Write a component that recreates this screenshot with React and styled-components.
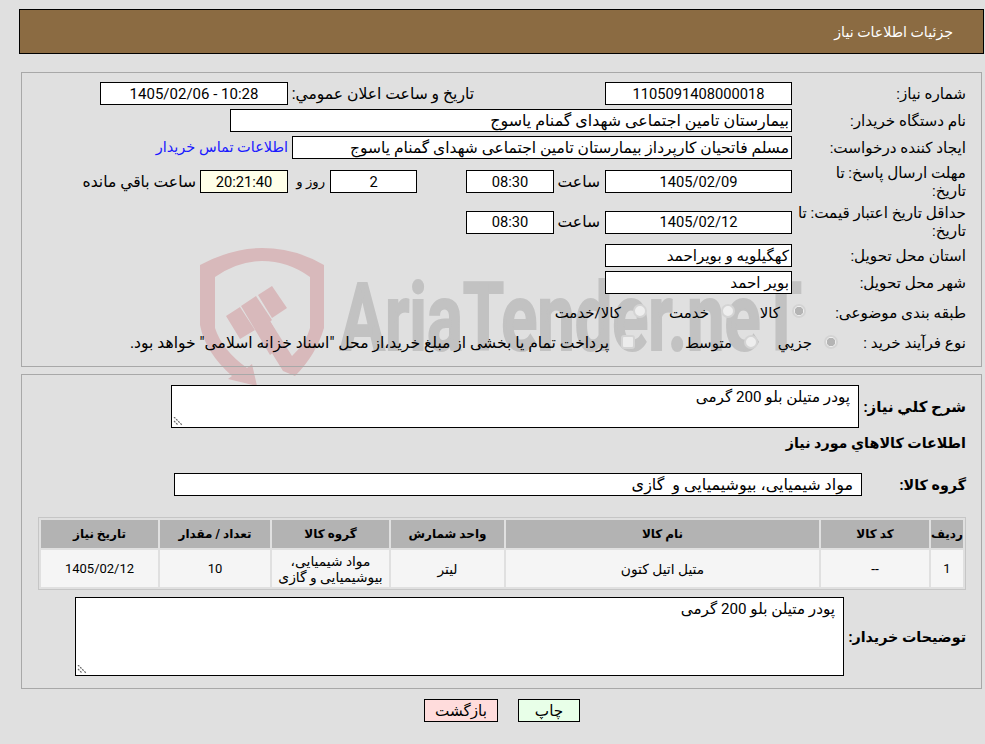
import React from "react";
import styled, { createGlobalStyle } from "styled-components";

const Global = createGlobalStyle`
  html, body { margin: 0; padding: 0; background: #e0e0e0; overflow: hidden; }
  body { font-family: Roboto, "DejaVu Sans", sans-serif; font-size: 15.2px; color: #000; }
`;
const Page = styled.div`
  position: relative;
  width: 985px;
  height: 744px;
  direction: rtl;
  overflow: hidden;
  padding-top: 9px;
  box-sizing: border-box;
`;
const Watermark = styled.svg`
  position: absolute;
  left: 0;
  top: 0;
  z-index: 0;
  pointer-events: none;
`;
const Header = styled.div`
  position: relative;
  z-index: 1;
  height: 45px;
  margin: 0 1px 0 19px;
  padding-right: 30px;
  box-sizing: border-box;
  display: flex;
  align-items: center;
  background: #8b6b42;
  border: 1px solid #000;
  color: #fff;
  font-size: 14.2px;
`;
const Panel = styled.section`
  position: relative;
  z-index: 1;
  box-sizing: border-box;
  margin: ${(p) => p.$mt}px 3px 0 21px;
  height: ${(p) => p.$h}px;
  padding: ${(p) => p.$pt}px 15px 0 16px;
  border: 1px solid #a8a8a8;
  display: flex;
  flex-direction: column;
  gap: ${(p) => p.$gap || 0}px;
`;
const Row = styled.div`
  display: flex;
  align-items: center;
  box-sizing: border-box;
  min-height: ${(p) => p.$h || 23}px;
  margin-top: ${(p) => p.$mt || 0}px;
  padding-top: ${(p) => p.$pt || 0}px;
`;
const Label = styled.div`
  flex: none;
  width: ${(p) => p.$w || 174}px;
  white-space: nowrap;
  line-height: 18px;
  font-weight: ${(p) => (p.$bold ? 700 : 400)};
  font-size: ${(p) => p.$fs || 15.2}px;
`;
const Field = styled.div`
  flex: none;
  box-sizing: border-box;
  width: ${(p) => p.$w}px;
  height: 23px;
  margin-right: ${(p) => p.$mr || 0}px;
  padding: 0 ${(p) => p.$pad ?? 2}px;
  background: ${(p) => p.$bg || "#fff"};
  border: 1px solid #000;
  display: flex;
  align-items: center;
  justify-content: ${(p) => (p.$center ? "center" : "flex-start")};
  white-space: pre;
  overflow: hidden;
  font-size: ${(p) => p.$fs || 15.2}px;
`;
const Inline = styled.span`
  flex: none;
  width: ${(p) => p.$w}px;
  margin-right: ${(p) => p.$mr || 0}px;
  white-space: nowrap;
  font-size: ${(p) => p.$fs || 15.6}px;
`;
const ContactLink = styled.a`
  margin-right: 4px;
  color: #1a1aff;
  text-decoration: none;
  font-size: 14.5px;
`;
const Option = styled.label`
  flex: none;
  width: ${(p) => p.$w}px;
  display: flex;
  align-items: center;
  gap: 12px;
  white-space: nowrap;
  font-size: ${(p) => p.$fs || 15}px;
`;
const Radio = styled.input.attrs({ disabled: true, readOnly: true })`
  appearance: none;
  flex: none;
  width: 14px;
  height: 14px;
  margin: 0 0 ${(p) => p.$lift}px;
  box-sizing: border-box;
  border: 2px solid #d4d4d4;
  border-radius: ${(p) => (p.type === "checkbox" ? "3px" : "50%")};
  background: ${(p) => (p.type === "checkbox" ? "#ececec" : "#eeeeee")};
  &:checked { background: radial-gradient(circle, #b4b4b4 0 4px, #f0f0f0 4.5px); }
`;
const AreaWrap = styled.div`
  position: relative;
  flex: none;
  width: ${(p) => p.$w}px;
  height: ${(p) => p.$hh}px;
`;
const Area = styled.textarea.attrs({ readOnly: true })`
  box-sizing: border-box;
  display: block;
  width: 100%;
  height: 100%;
  margin: 0;
  padding: 3px 8px;
  border: 1px solid #000;
  border-radius: 0;
  background: #fff;
  color: #000;
  font: inherit;
  line-height: 17px;
  outline: none;
  overflow: hidden;
  resize: none;
  direction: rtl;
`;
const Grip = styled.svg`
  position: absolute;
  left: 2px;
  bottom: 1px;
`;
const Heading = styled.div`
  font-weight: 700;
  font-size: 14.3px;
  line-height: 18px;
`;
const Table = styled.table`
  table-layout: fixed;
  width: 928px;
  margin: 0 0 0 -1px;
  border-collapse: separate;
  border-spacing: 2px;
  border: 1px solid #c6c6c6;
  font-size: 13.8px;
`;
const Th = styled.th`
  height: 28px;
  padding: 0;
  background: #b3b3b3;
  font-weight: 700;
  font-size: 12px;
  text-align: center;
`;
const Td = styled.td`
  height: 37px;
  padding: 0 2px;
  background: #f5f5f5;
  text-align: center;
  line-height: 16px;
  font-size: ${(p) => p.$fs || 13.8}px;
`;
const Actions = styled.div`
  position: relative;
  z-index: 1;
  margin-top: 10px;
  display: flex;
  justify-content: center;
  gap: 20px;
  padding-left: 19px;
`;
const Button = styled.button`
  box-sizing: border-box;
  width: ${(p) => p.$w}px;
  height: 23px;
  padding: 0;
  border: 1px solid #000;
  border-radius: 0;
  background: ${(p) => p.$bg};
  font: inherit;
  color: #000;
`;

const cols = [32, 108, 313, 113, 117, 110, 117];

const ResizeGrip = () => (
  <Grip width="10" height="10" viewBox="0 0 10 10" aria-hidden="true">
    <path d="M1 0 L9 8 M1 4 L5 8" stroke="#6a6a6a" strokeWidth="1.2" strokeDasharray="2 1" fill="none" />
  </Grip>
);

export default function App() {
  return (
    <Page>
      <Global />
      <Watermark width="985" height="744" viewBox="0 0 985 744" aria-hidden="true">
        <path fill="#d8b9bb" d="M200 265 Q232 248 262 248 Q295 248 324 265 L324 328 Q316 355 295 376 L283 371 L262 337 L270 321 L292 356 Q306 343 310 328 L310 277 Q288 261 262 261 Q238 261 215 277 L215 328 Q222 350 247 368 L252 364 L257 386 L228 379 L232 376 Q205 352 200 325 Z" />
        <path fill="#d8b9bb" d="M226 316 L240 307 L255 330 L240 339 Z M241 306 L256 296 L272 320 L257 333 Z M258 295 L272 286 L287 308 L272 318 Z M257 333 L270 321 L283 345 L270 355 Z" />
        <text x="340" y="350" fontFamily="Roboto, sans-serif" fontWeight="700" fontSize="94" fill="#c2c2c2" stroke="#c2c2c2" strokeWidth="2" textLength="462" lengthAdjust="spacingAndGlyphs" style={{ direction: "ltr" }}>AriaTender.neT</text>
      </Watermark>

      <Header>جزئيات اطلاعات نياز</Header>

      <Panel $mt={18} $h={295} $pt={9} $gap={4}>
        <Row>
          <Label>شماره نياز:</Label>
          <Field $w={187} $center $fs={14.7}>1105091408000018</Field>
          <Inline $w={181} $mr={131}>تاريخ و ساعت اعلان عمومي:</Inline>
          <Field $w={188} $mr={5} $center $fs={15}>10:28 - 1405/02/06</Field>
        </Row>
        <Row>
          <Label>نام دستگاه خريدار:</Label>
          <Field $w={562} $fs={15.9}>بيمارستان تامين اجتماعی شهدای گمنام ياسوج</Field>
        </Row>
        <Row>
          <Label>ايجاد كننده درخواست:</Label>
          <Field $w={500} $fs={15.5}>مسلم فاتحيان كارپرداز بيمارستان تامين اجتماعی شهدای گمنام ياسوج</Field>
          <ContactLink href="#">اطلاعات تماس خريدار</ContactLink>
        </Row>
        <Row $h={37}>
          <Label>مهلت ارسال پاسخ: تا<br />تاريخ:</Label>
          <Field $w={187} $center $fs={14.7}>1405/02/09</Field>
          <Inline $w={42} $mr={5}>ساعت</Inline>
          <Field $w={88} $mr={4} $center $fs={14.7}>08:30</Field>
          <Field $w={87} $mr={49} $center $fs={14.7}>2</Field>
          <Inline $w={28} $mr={5} $fs={13.2}>روز و</Inline>
          <Field $w={88} $mr={9} $bg="#ffffe8" $center $fs={14.7}>20:21:40</Field>
          <Inline $w={113} $mr={4}>ساعت باقي مانده</Inline>
        </Row>
        <Row $h={36}>
          <Label>حداقل تاريخ اعتبار قيمت: تا<br />تاريخ:</Label>
          <Field $w={187} $center $fs={14.7}>1405/02/12</Field>
          <Inline $w={42} $mr={5}>ساعت</Inline>
          <Field $w={88} $mr={4} $center $fs={14.7}>08:30</Field>
        </Row>
        <Row>
          <Label>استان محل تحويل:</Label>
          <Field $w={187}>كهگيلويه و بويراحمد</Field>
        </Row>
        <Row>
          <Label>شهر محل تحويل:</Label>
          <Field $w={187}>بوير احمد</Field>
        </Row>
        <Row $h={26} $pt={4}>
          <Label $w={160}>طبقه بندی موضوعی:</Label>
          <Option $w={71}><Radio $lift={4} type="radio" name="k" defaultChecked />كالا</Option>
          <Option $w={88}><Radio $lift={4} type="radio" name="k" />خدمت</Option>
          <Option $w={100}><Radio $lift={4} type="radio" name="k" />كالا/خدمت</Option>
        </Row>
        <Row $h={28} $pt={2}>
          <Label $w={128}>نوع فرآيند خريد :</Label>
          <Option $w={80}><Radio $lift={2} type="radio" name="f" defaultChecked />جزيي</Option>
          <Option $w={123}><Radio $lift={2} type="radio" name="f" />متوسط</Option>
          <Option $w={500} $fs={15.6}><Radio $lift={2} type="checkbox" />پرداخت تمام يا بخشی از مبلغ خريد،از محل "اسناد خزانه اسلامی" خواهد بود.</Option>
        </Row>
      </Panel>

      <Panel $mt={7} $h={315} $pt={10}>
        <Row $h={43}>
          <Label $w={107} $bold $fs={15}>شرح كلي نياز:</Label>
          <AreaWrap $w={688} $hh={43}>
            <Area defaultValue="پودر متيلن بلو 200 گرمی" />
            <ResizeGrip />
          </AreaWrap>
        </Row>
        <Row $h={18} $mt={6}><Heading>اطلاعات كالاهاي مورد نياز</Heading></Row>
        <Row $mt={21}>
          <Label $w={104} $bold $fs={14.3}>گروه كالا:</Label>
          <Field $w={688} $pad={8} $fs={16}>مواد شيميايی، بيوشيميايی و  گازی</Field>
        </Row>
        <Row $mt={21} $h={72}>
          <Table>
            <colgroup>{cols.map((w, i) => <col key={i} style={{ width: w }} />)}</colgroup>
            <thead>
              <tr>
                <Th>رديف</Th><Th>كد كالا</Th><Th>نام كالا</Th><Th>واحد شمارش</Th><Th>گروه كالا</Th><Th>تعداد / مقدار</Th><Th>تاريخ نياز</Th>
              </tr>
            </thead>
            <tbody>
              <tr>
                <Td $fs={13}>1</Td><Td>--</Td><Td>متيل اتيل كتون</Td><Td>ليتر</Td><Td>مواد شيميايی، بيوشيميايی و گازی</Td><Td $fs={13}>10</Td><Td $fs={13}>1405/02/12</Td>
              </tr>
            </tbody>
          </Table>
        </Row>
        <Row $h={79} $mt={7}>
          <Label $w={122} $bold $fs={14.3}>توضيحات خريدار:</Label>
          <AreaWrap $w={769} $hh={79}>
            <Area defaultValue="پودر متيلن بلو 200 گرمی" />
            <ResizeGrip />
          </AreaWrap>
        </Row>
      </Panel>

      <Actions>
        <Button $w={62} $bg="#e8ffe8">چاپ</Button>
        <Button $w={74} $bg="#ffdcdc">بازگشت</Button>
      </Actions>
    </Page>
  );
}
